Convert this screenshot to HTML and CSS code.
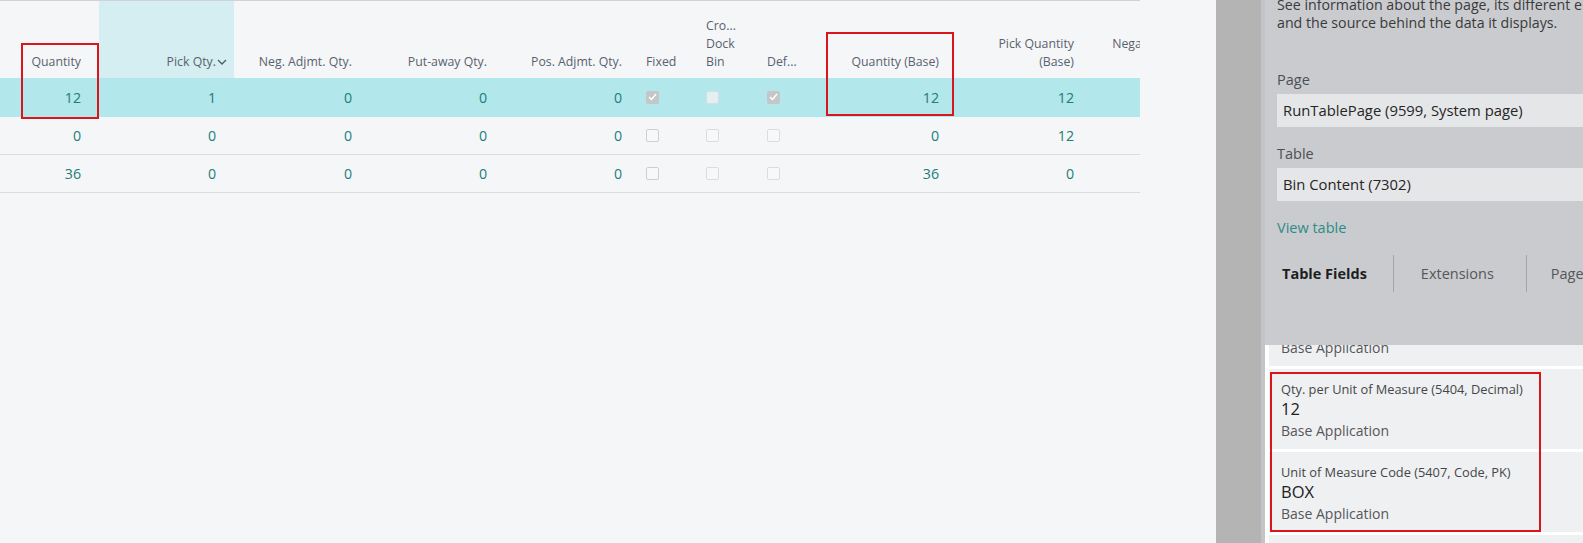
FILE: index.html
```html
<!DOCTYPE html>
<html lang="en">
<head>
<meta charset="utf-8">
<title>Bin Content</title>
<link rel="stylesheet" href="styles.css">
</head>
<body>
<div class="page">
  <main class="main">
    <div class="grid-wrap">
      <table class="grid">
        <colgroup>
          <col class="w99"><col class="w135"><col class="w136"><col class="w135"><col class="w135">
          <col class="w60"><col class="w61"><col class="w60"><col class="w136"><col class="w135"><col class="w135">
        </colgroup>
        <thead>
          <tr>
            <th class="num">Quantity</th>
            <th class="num sorted">Pick Qty.<svg class="chev" width="10" height="6" viewBox="0 0 10 6"><path d="M1 1 L5 5 L9 1" fill="none" stroke="#505a66" stroke-width="1.3"/></svg></th>
            <th class="num">Neg. Adjmt. Qty.</th>
            <th class="num">Put-away Qty.</th>
            <th class="num">Pos. Adjmt. Qty.</th>
            <th class="chk">Fixed</th>
            <th class="chk">Cro...<br>Dock<br>Bin</th>
            <th class="chk">Def...</th>
            <th class="num">Quantity (Base)</th>
            <th class="num">Pick Quantity<br>(Base)</th>
            <th class="num last">Negative Adjmt.<br>Qty. (Base)</th>
          </tr>
        </thead>
        <tbody>
          <tr class="selected">
            <td class="num">12</td><td class="num">1</td><td class="num">0</td><td class="num">0</td><td class="num">0</td>
            <td class="chk"><span class="box checked"><svg width="9" height="8" viewBox="0 0 9 8"><path d="M1 4 L3.5 6.5 L8 1" fill="none" stroke="#fff" stroke-width="1.5"/></svg></span></td>
            <td class="chk"><span class="box light"></span></td>
            <td class="chk"><span class="box checked"><svg width="9" height="8" viewBox="0 0 9 8"><path d="M1 4 L3.5 6.5 L8 1" fill="none" stroke="#fff" stroke-width="1.5"/></svg></span></td>
            <td class="num">12</td><td class="num">12</td><td class="num"></td>
          </tr>
          <tr>
            <td class="num">0</td><td class="num">0</td><td class="num">0</td><td class="num">0</td><td class="num">0</td>
            <td class="chk"><span class="box"></span></td>
            <td class="chk"><span class="box faint"></span></td>
            <td class="chk"><span class="box faint"></span></td>
            <td class="num">0</td><td class="num">12</td><td class="num"></td>
          </tr>
          <tr>
            <td class="num">36</td><td class="num">0</td><td class="num">0</td><td class="num">0</td><td class="num">0</td>
            <td class="chk"><span class="box"></span></td>
            <td class="chk"><span class="box faint"></span></td>
            <td class="chk"><span class="box faint"></span></td>
            <td class="num">36</td><td class="num">0</td><td class="num"></td>
          </tr>
        </tbody>
      </table>
    </div>
  </main>
  <div class="strip"></div>
  <aside class="panel">
    <div class="panel-head">
      <p class="desc">See information about the page, its different elements,<br>and the source behind the data it displays.</p>
      <div class="field first-field">
        <div class="label">Page</div>
        <div class="input">RunTablePage (9599, System page)</div>
      </div>
      <div class="field">
        <div class="label">Table</div>
        <div class="input">Bin Content (7302)</div>
      </div>
      <a class="link">View table</a>
      <div class="tabs">
        <span class="tab active">Table Fields</span>
        <span class="sep sep1"></span>
        <span class="tab">Extensions</span>
        <span class="sep sep2"></span>
        <span class="tab">Page Filters</span>
      </div>
    </div>
    <div class="cards">
      <div class="card first">
        <div class="c-label">Bin Code (5403, Code)</div>
        <div class="c-value">PICK</div>
        <div class="c-app">Base Application</div>
      </div>
      <div class="card">
        <div class="c-label">Qty. per Unit of Measure (5404, Decimal)</div>
        <div class="c-value">12</div>
        <div class="c-app">Base Application</div>
      </div>
      <div class="card">
        <div class="c-label">Unit of Measure Code (5407, Code, PK)</div>
        <div class="c-value">BOX</div>
        <div class="c-app">Base Application</div>
      </div>
      <div class="card">
        <div class="c-label">Fixed (9, Boolean)</div>
        <div class="c-value">Yes</div>
        <div class="c-app">Base Application</div>
      </div>
    </div>
  </aside>
  <div class="mark mark-qty"></div>
  <div class="mark mark-base"></div>
  <div class="mark mark-cards"></div>
</div>
</body>
</html>
```

FILE: styles.css
```css
* { box-sizing: border-box; }
html, body { margin: 0; padding: 0; }
body {
  width: 1583px;
  height: 543px;
  overflow: hidden;
  font-family: "Open Sans", "Noto Sans", sans-serif;
  background: #f5f6f8;
}
.page {
  position: relative;
  display: flex;
  width: 1583px;
  height: 543px;
}
.main {
  width: 1216px;
  flex: none;
  background: #f5f6f8;
}
.grid-wrap {
  width: 1140px;
  overflow: hidden;
  border-top: 1px solid #cfd3d8;
}
.grid {
  table-layout: fixed;
  width: 1227px;
  border-collapse: collapse;
  border-spacing: 0;
}
.w99 { width: 99px; }
.w135 { width: 135px; }
.w136 { width: 136px; }
.w60 { width: 60px; }
.w61 { width: 61px; }
.grid th {
  height: 77px;
  vertical-align: bottom;
  font-weight: 400;
  font-size: 12.3px;
  line-height: 18px;
  color: #59626c;
  padding: 0 18px 7px 6px;
  white-space: nowrap;
}
.grid th.num { text-align: right; }
.grid th.chk { text-align: left; }
.grid th.last { padding-right: 24px; }
.grid th.sorted {
  background: #d5eef1;
  position: relative;
}
.chev {
  position: absolute;
  right: 7px;
  bottom: 13px;
}
.grid td {
  height: 38px;
  font-size: 14.2px;
  color: #217d7a;
  padding: 1px 18px 0 6px;
  border-bottom: 1px solid #d9dce0;
  vertical-align: middle;
}
.grid td.num { text-align: right; }
.grid tr.selected td {
  background: #b2e7eb;
  border-bottom-color: #b2e7eb;
}
.box {
  display: block;
  width: 13px;
  height: 13px;
  border: 1px solid #cdcfd1;
  border-radius: 2px;
  background: #f7f8f9;
}
.box.faint { border-color: #dadcde; }
.box.light { background: #e3eff1; border-color: #d5dfe1; }
.box.checked {
  background: #c4c7c8;
  border-color: #c4c7c8;
  display: flex;
  align-items: center;
  justify-content: center;
}
.strip {
  width: 45px;
  flex: none;
  background: #b4b4b4;
}
.panel {
  width: 322px;
  flex: none;
  overflow: hidden;
  background: #c9cbcf;
  border-left: 4px solid #c2c4c8;
  display: flex;
  flex-direction: column;
}
.panel-head {
  height: 345px;
  flex: none;
  padding-left: 12px;
  width: 460px;
  color: #303030;
}
.desc {
  margin: -4px 0 0 0;
  font-size: 14.2px;
  line-height: 18px;
  color: #3a3a3a;
  white-space: nowrap;
}
.field { margin-top: 16px; }
.field.first-field { margin-top: 37px; }
.label {
  font-size: 14.5px;
  line-height: 22px;
  color: #4e4f51;
  margin-bottom: 3px;
}
.input {
  height: 33px;
  line-height: 33px;
  background: #e5e6e8;
  padding-left: 6px;
  font-size: 14.8px;
  color: #252525;
}
.link {
  display: block;
  margin-top: 16px;
  font-size: 14.5px;
  line-height: 22px;
  color: #2f8b87;
}
.tabs {
  display: flex;
  align-items: center;
  margin-top: 16px;
  height: 37px;
  padding-left: 5px;
}
.tab {
  font-size: 14.5px;
  color: #555759;
  white-space: nowrap;
}
.tab.active {
  font-weight: 700;
  color: #1e1e1e;
}
.sep {
  width: 1px;
  height: 37px;
  background: #a3a5a8;
}
.sep1 { margin: 0 27px 0 26px; }
.sep2 { margin: 0 24px 0 32px; }
.cards {
  flex: 1;
  background: #ffffff;
  padding-left: 4px;
  overflow: hidden;
  width: 318px;
}
.card {
  background: #eff0f2;
  padding: 11px 12px 7px 12px;
  margin-bottom: 3px;
  width: 400px;
}
.card.first { margin-top: -59px; }
.c-label {
  font-size: 12.8px;
  line-height: 18px;
  color: #444648;
  white-space: nowrap;
}
.c-value {
  font-size: 16.5px;
  line-height: 22px;
  color: #202020;
}
.c-app {
  font-size: 14px;
  line-height: 22px;
  color: #55575a;
}
.mark {
  position: absolute;
  border: 2px solid #d9161c;
}
.mark-qty { left: 21px; top: 43px; width: 78px; height: 76px; }
.mark-base { left: 826px; top: 32px; width: 128px; height: 84px; }
.mark-cards { left: 1270px; top: 372px; width: 271px; height: 160px; }
```
